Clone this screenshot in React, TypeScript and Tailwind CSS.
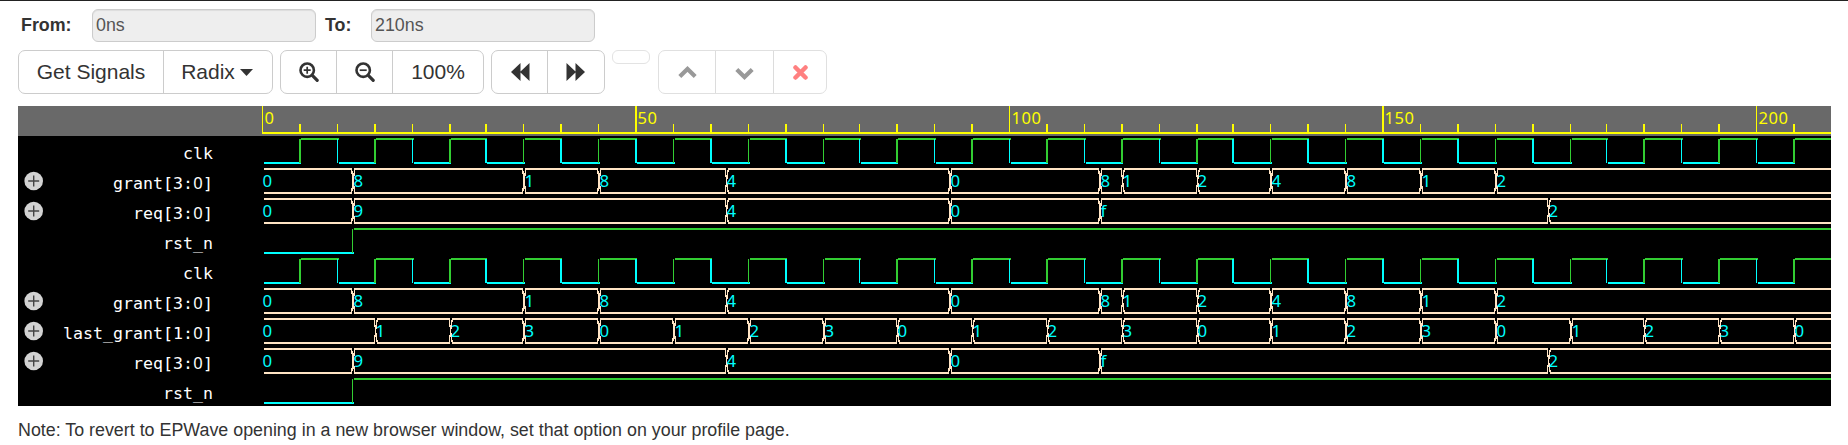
import { Fragment, type ReactNode } from "react";

const ORIGIN = 244;
const PX_PER_NS = 4.98;
const WIDTH = 1813;
const LABEL_WIDTH = 200;

const units = (ns: number) => Math.floor(ns * PX_PER_NS + 0.5 + 1e-9);
const edge = (ns: number) => ORIGIN + 1.5 * units(ns);
const lineX = (ns: number) => Math.floor(edge(ns));
const lineW = (ns: number) => (units(ns) % 2 === 0 ? 1 : 2);
const startX = (ns: number) => Math.ceil(edge(ns) + 1.5);

const HIGH = "#32cd32";
const LOW = "#00ffff";
const BUS = "#ffe4c4";

type Change = [number, string];
type Signal = { name: string; bus: boolean; changes: Change[] };

const clk: Signal = {
  name: "clk",
  bus: false,
  changes: Array.from({ length: 43 }, (_, i): Change => [i * 5, String(i % 2)]),
};
const grant: Signal = {
  name: "grant[3:0]",
  bus: true,
  changes: [
    [0, "0"], [12, "8"], [35, "1"], [45, "8"], [62, "4"], [92, "0"], [112, "8"],
    [115, "1"], [125, "2"], [135, "4"], [145, "8"], [155, "1"], [165, "2"],
  ],
};
const req: Signal = {
  name: "req[3:0]",
  bus: true,
  changes: [[0, "0"], [12, "9"], [62, "4"], [92, "0"], [112, "f"], [172, "2"]],
};
const rst: Signal = { name: "rst_n", bus: false, changes: [[0, "0"], [12, "1"]] };
const lastGrant: Signal = {
  name: "last_grant[1:0]",
  bus: true,
  changes: [
    [0, "0"],
    ...Array.from({ length: 20 }, (_, i): Change => [15 + i * 10, String((i + 1) % 4)]),
  ],
};

const signals = [clk, grant, req, rst, clk, grant, lastGrant, req, rst];

function Ruler() {
  const ticks = Array.from({ length: 43 }, (_, i) => i * 5);
  return (
    <svg className="block" width={WIDTH} height={30} shapeRendering="crispEdges">
      <rect width={WIDTH} height={30} fill="#696969" />
      <rect x={ORIGIN} y={26} width={WIDTH - ORIGIN} height={2} fill="#ffff00" />
      {ticks.map((t) => {
        const major = t % 50 === 0;
        return (
          <Fragment key={t}>
            <rect x={lineX(t)} y={major ? 0 : 18} width={lineW(t)} height={major ? 28 : 9} fill="#ffff00" />
            {major && (
              <text x={lineX(t) + 2.5} y={18} fill="#ffff00" className="font-['Noto_Sans',sans-serif] text-[16.5px] tracking-[0.5px]">
                {t}
              </text>
            )}
          </Fragment>
        );
      })}
    </svg>
  );
}

function Wave({ signal }: { signal: Signal }) {
  const parts: ReactNode[] = signal.changes.map(([t, v], i) => {
    const next = signal.changes[i + 1];
    const x = lineX(t);
    if (signal.bus) {
      const left = i === 0 ? startX(t) : Math.floor(edge(t) + 3);
      const right = next ? lineX(next[0]) - 1 : WIDTH;
      const a = edge(t) - 0.6;
      const b = edge(t) + 2.9;
      return (
        <Fragment key={t}>
          <rect x={left} y={2} width={right - left} height={2} fill={BUS} />
          <rect x={left} y={26} width={right - left} height={2} fill={BUS} />
          {i > 0 && (
            <path d={`M${a} 2L${b} 28M${b} 2L${a} 28`} stroke={BUS} strokeWidth={1.3} fill="none" />
          )}
          <text x={i === 0 ? x + 0.5 : x + 1.5} y={21} fill={LOW} className="font-['Noto_Sans',sans-serif] text-[16.8px]">
            {v}
          </text>
        </Fragment>
      );
    }
    const high = v === "1";
    const from = startX(t);
    const to = next ? startX(next[0]) : WIDTH;
    return (
      <Fragment key={t}>
        <rect x={from} y={high ? 2 : 26} width={Math.max(0, to - from)} height={2} fill={high ? HIGH : LOW} />
        {i > 0 && <rect x={x} y={3} width={lineW(t)} height={24} fill={high ? HIGH : LOW} />}
      </Fragment>
    );
  });
  return (
    <svg
      className="block shrink-0"
      width={WIDTH - LABEL_WIDTH}
      height={30}
      viewBox={`${LABEL_WIDTH} 0 ${WIDTH - LABEL_WIDTH} 30`}
      shapeRendering="crispEdges"
    >
      {parts}
    </svg>
  );
}

function SignalRow({ signal }: { signal: Signal }) {
  return (
    <div className="flex h-[30px]">
      <div className="flex w-[200px] shrink-0 items-center pl-1.5">
        {signal.bus && (
          <svg width="20" height="20" viewBox="0 0 20 20" className="shrink-0">
            <circle cx="9.7" cy="10" r="9.3" fill="#d3d3d3" />
            <path d="M9.7 4.500v11M4.200 10h11" stroke="#444" strokeWidth="1.4" />
          </svg>
        )}
        <div className="ml-auto flex h-[30px] items-baseline pt-[5px] pr-[5px] font-['DejaVu_Sans_Mono',monospace] text-[16.6px] leading-[25px] text-white">
          {signal.name.split("").map((c, i) => (
            <span key={i} className={c === "0" ? "w-[10px] text-center font-['Noto_Sans',sans-serif] leading-[16px]" : "w-[10px]"}>
              {c}
            </span>
          ))}
        </div>
      </div>
      <Wave signal={signal} />
    </div>
  );
}

function Group({ children, faded = false }: { children: ReactNode; faded?: boolean }) {
  return (
    <div className={`flex h-11 divide-x rounded-[7px] border ${faded ? "divide-[#dcdcdc] border-[#e0e0e0]" : "divide-[#ccc] border-[#ccc]"}`}>
      {children}
    </div>
  );
}

function Magnifier({ plus = false }: { plus?: boolean }) {
  return (
    <svg width="20" height="20" viewBox="0 0 20 20" fill="none" stroke="#333">
      <circle cx="8.2" cy="8.2" r="6.700" strokeWidth="2.6" />
      <path d="M13.300 13.300l4.900 5" strokeWidth="3.200" strokeLinecap="round" />
      <path d={plus ? "M4.700 8.200h7M8.200 4.700v7" : "M4.700 8.200h7"} strokeWidth="1.700" />
    </svg>
  );
}

function Rewind({ flip = false }: { flip?: boolean }) {
  return (
    <svg width="19" height="18" viewBox="0 0 19 18" fill="#333" className={flip ? "-scale-x-100" : ""}>
      <path d="M0 9L9.500 0v18zM9 9l9.500-9v18z" />
    </svg>
  );
}

function Chevron({ down = false }: { down?: boolean }) {
  return (
    <svg width="19" height="13" viewBox="0 0 19 13" className={down ? "rotate-180" : ""}>
      <path d="M1.800 10.500L9.500 3l7.700 7.500" fill="none" stroke="#999" strokeWidth="4.200" />
    </svg>
  );
}

const cell = "flex items-center justify-center";
const field =
  "flex h-[33px] w-[224px] items-center rounded-md border border-[#ccc] bg-[#eee] px-[3px] text-[#555] shadow-[inset_0_1px_1px_rgba(0,0,0,0.075)]";

export default function App() {
  return (
    <div className="h-[445px] overflow-hidden border-t border-[#222] bg-white pl-[18px] font-['Liberation_Sans',Arial,sans-serif] text-[#333]">
      <div className="flex h-[49px] items-center text-[17.85px]">
        <label className="w-[74px] pl-[3px] font-bold">From:</label>
        <div className={field}>0ns</div>
        <label className="w-[55px] pl-[9px] font-bold">To:</label>
        <div className={field}>210ns</div>
      </div>
      <div className="flex items-start gap-[7px] text-[21px]">
        <Group>
          <div className={`${cell} w-[145px]`}>Get Signals</div>
          <div className={`${cell} w-[108px] gap-[5px] pr-[2px]`}>
            Radix
            <svg width="13" height="7" viewBox="0 0 13 7">
              <path d="M0 0h13L6.500 7z" fill="#333" />
            </svg>
          </div>
        </Group>
        <Group>
          <div className={`${cell} w-[56px]`}><Magnifier plus /></div>
          <div className={`${cell} w-[56px]`}><Magnifier /></div>
          <div className={`${cell} w-[90px]`}>100%</div>
        </Group>
        <Group>
          <div className={`${cell} w-[56px] pl-[2px]`}><Rewind /></div>
          <div className={`${cell} w-[56px] pr-[2px]`}><Rewind flip /></div>
        </Group>
        <div className="mr-[1px] h-[14px] w-[38px] rounded-[6px] border border-[#e3e3e3]" />
        <Group faded>
          <div className={`${cell} w-[57px]`}><Chevron /></div>
          <div className={`${cell} w-[58px] pr-[1px] pt-[2px]`}><Chevron down /></div>
          <div className={`${cell} w-[52px]`}>
            <svg width="15" height="15" viewBox="0 0 15 15">
              <path d="M2.500 2.500l10 10M12.500 2.500l-10 10" stroke="#ff8080" strokeWidth="4.500" strokeLinecap="round" />
            </svg>
          </div>
        </Group>
      </div>
      <div className="mt-3 w-[1813px] bg-black">
        <Ruler />
        {signals.map((s, i) => (
          <SignalRow key={i} signal={s} />
        ))}
      </div>
      <p className="mt-3 text-[17.85px] leading-6">
        Note: To revert to EPWave opening in a new browser window, set that option on your profile page.
      </p>
    </div>
  );
}
